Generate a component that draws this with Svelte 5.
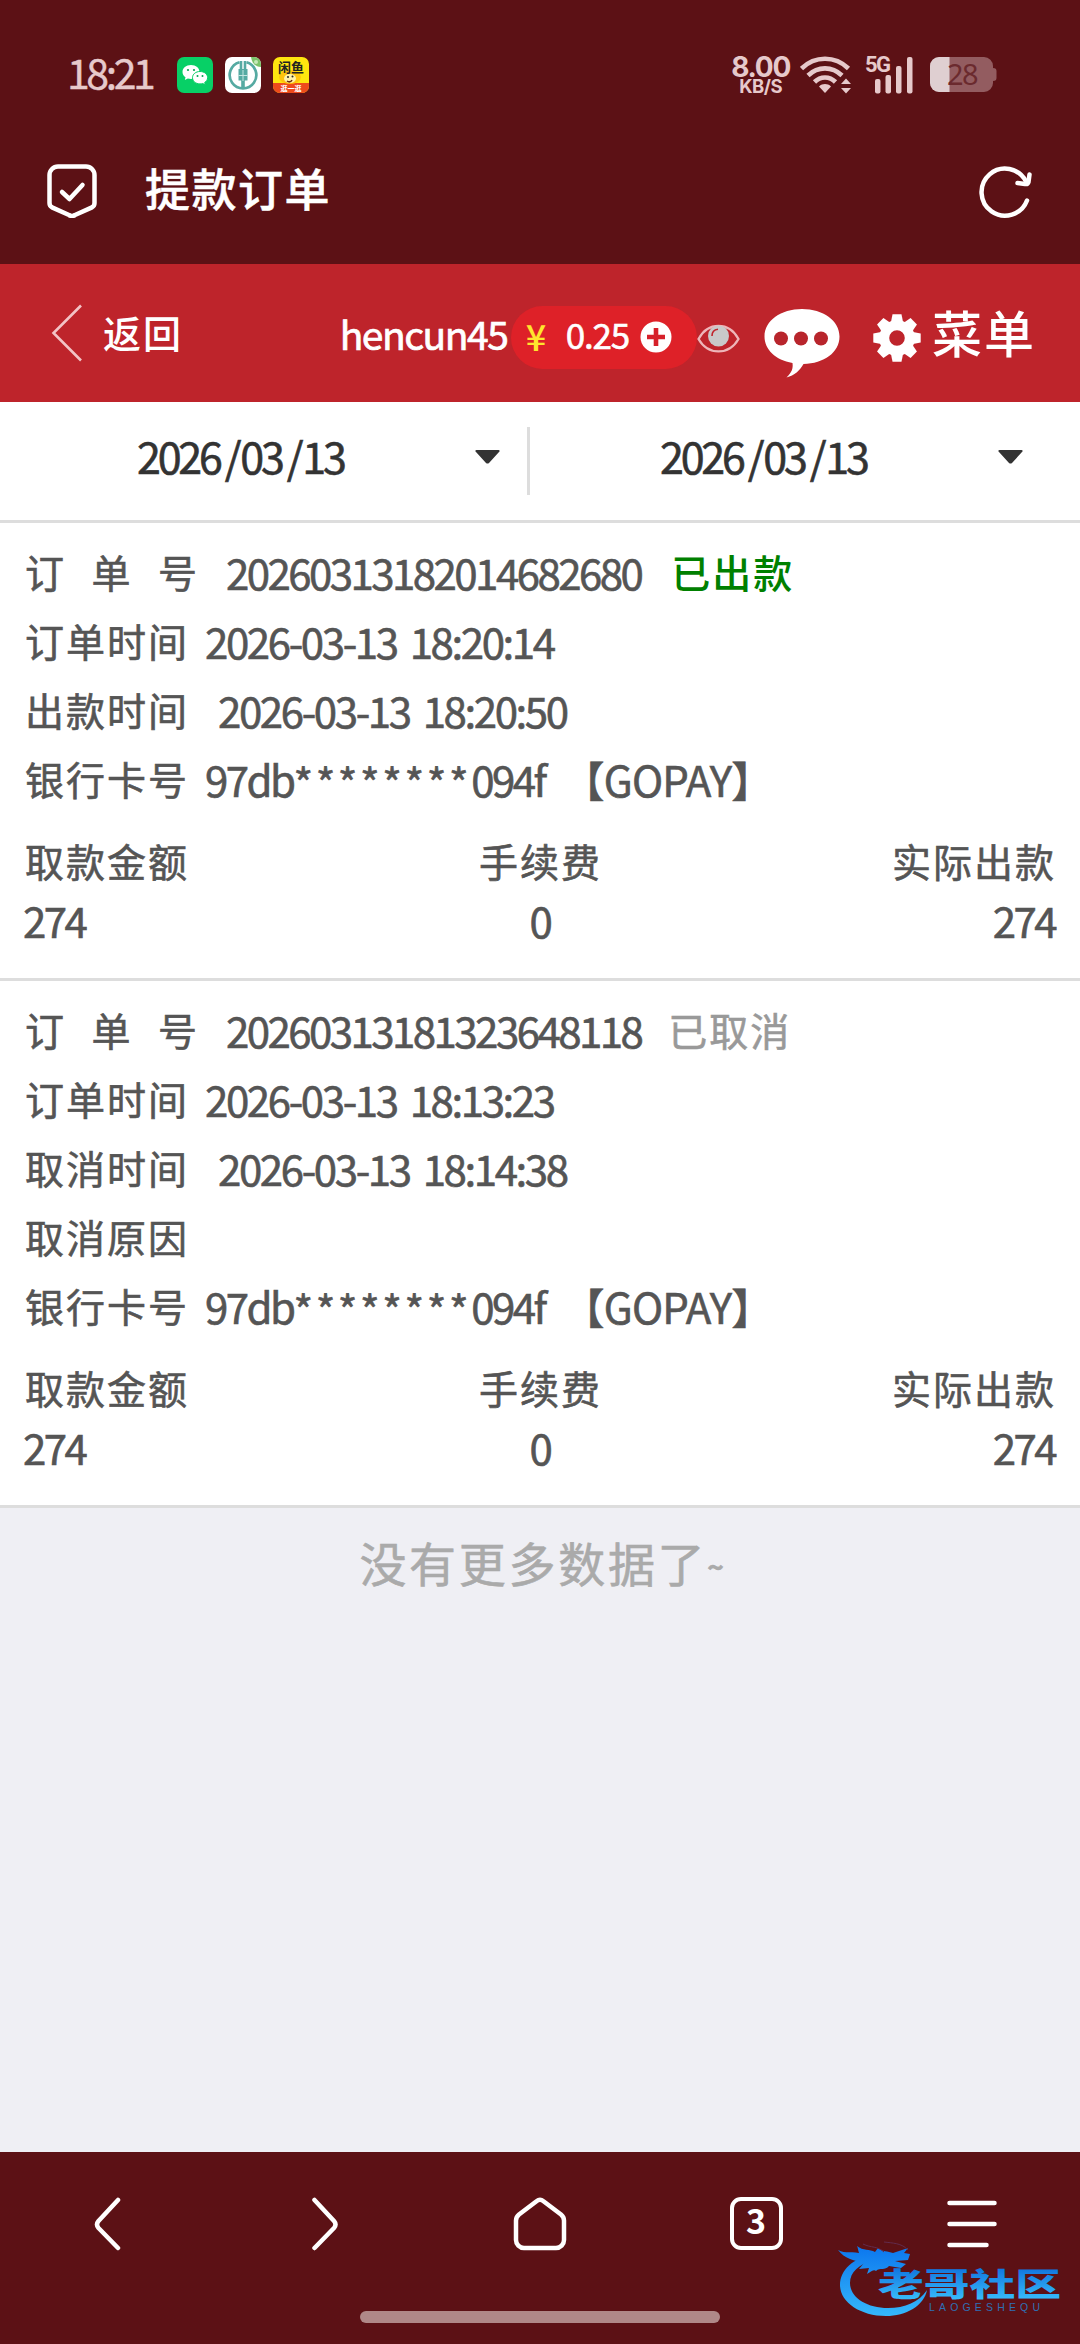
<script>
  const orders = [
    {
      id: '20260313182014682680',
      status: '已出款',
      done: true,
      created: '2026-03-13 18:20:14',
      lines: [{ label: '出款时间', value: '2026-03-13 18:20:50' }],
      card: ['97db', '********', '094f'],
      channel: '【GOPAY】',
      amount: 274,
      fee: 0,
      paid: 274
    },
    {
      id: '20260313181323648118',
      status: '已取消',
      done: false,
      created: '2026-03-13 18:13:23',
      lines: [
        { label: '取消时间', value: '2026-03-13 18:14:38' },
        { label: '取消原因', value: '' }
      ],
      card: ['97db', '********', '094f'],
      channel: '【GOPAY】',
      amount: 274,
      fee: 0,
      paid: 274
    }
  ];

  let dates = $state(['2026/03/13', '2026/03/13']);
  let tabs = $state(3);
</script>

<div class="screen">
  <div class="status-bar">
    <span class="clock">18:21</span>
    <div class="apps">
      <svg width="36" height="36" viewBox="0 0 36 36">
        <rect width="36" height="36" rx="7" fill="#07d066" />
        <path d="M14 8c-5 0-8.500 3-8.500 7 0 2.200 1.100 4 3 5.300L7.800 23l3-1.500c1 .3 2 .5 3.200.5 5 0 8.500-3 8.500-7s-3.500-7-8.500-7z" fill="#fff" />
        <path d="M23 14.500c-4.300 0-7.500 2.700-7.500 6.200s3.200 6.200 7.500 6.200c1 0 1.900-.1 2.700-.4l2.600 1.300-.6-2.400c1.800-1.100 2.900-2.800 2.900-4.700 0-3.500-3.200-6.200-7.600-6.200z" fill="#fff" stroke="#07d066" stroke-width="1" />
        <g fill="#07a552">
          <circle cx="11" cy="13" r="1.100" /><circle cx="17" cy="13" r="1.100" />
          <circle cx="20.500" cy="19" r="1" /><circle cx="25.500" cy="19" r="1" />
        </g>
      </svg>
      <svg width="36" height="36" viewBox="0 0 36 36">
        <rect width="36" height="36" rx="7" fill="#fff" />
        <path d="M26 0h3a7 7 0 0 1 7 7v3c-5 0-9-3-10-10z" fill="#7cc36a" />
        <circle cx="31" cy="5" r="2" fill="#c5e8b8" />
        <path d="M14.500 5.200a13.300 13.300 0 1 0 7 0" fill="none" stroke="#55aaa2" stroke-width="2.700" />
        <path d="M16 4v10M20 4v10" stroke="#55aaa2" stroke-width="2.600" />
        <path d="M13.500 12h9v11.500h-2.700V32h-3.600v-8.500h-2.700z" fill="#55aaa2" />
        <path d="M18 13v11M13.500 18.500h9" stroke="#c4e6e2" stroke-width="1" />
      </svg>
      <svg width="36" height="36" viewBox="0 0 36 36">
        <rect width="36" height="36" rx="7" fill="#ffe60f" />
        <path d="M0 26h36v3a7 7 0 0 1-7 7H7a7 7 0 0 1-7-7z" fill="#ee4a1c" />
        <ellipse cx="17" cy="20" rx="11" ry="7" fill="#ffc40c" />
        <ellipse cx="17" cy="21.500" rx="6" ry="4.500" fill="#fff1a8" />
        <path d="M14 24c2 1.500 4 1 5-1" stroke="#6b2b10" stroke-width="1.500" fill="none" />
        <circle cx="15" cy="20" r="1" fill="#222" /><circle cx="19.500" cy="19.500" r="1" fill="#222" />
        <text class="fish" x="18" y="15" text-anchor="middle">闲鱼</text>
        <text class="fish-sub" x="18" y="33.500" text-anchor="middle">逛一逛</text>
      </svg>
    </div>

    <div class="net">
      <span class="speed">8.00</span>
      <span class="unit">KB/S</span>
    </div>
    <svg class="wifi" width="52" height="38" viewBox="0 0 52 38">
      <g fill="none" stroke="#e6c9cb" stroke-width="4.600">
        <path d="M1.500 12.500C15-.5 35-.5 48.500 12.500" />
        <path d="M8 19.500c10-9.500 24-9.500 34 0" />
        <path d="M14.500 26c6-6 15-6 21 0" />
      </g>
      <path d="M19 30.500c3.500-3.200 8.500-3.200 12 0L25 37z" fill="#e6c9cb" />
      <path d="M46 22.500l5 5.500H41zM46 37.500l5-5.500H41z" fill="#e6c9cb" />
    </svg>
    <div class="signal">
      <span class="gen">5G</span>
      <svg width="40" height="38" viewBox="0 0 40 38" fill="#e6c9cb">
        <rect x="1" y="23" width="5.500" height="14.500" rx="2" />
        <rect x="11.500" y="19" width="5.500" height="18.500" rx="2" />
        <rect x="22" y="10" width="5.500" height="27.500" rx="2" />
        <rect x="33" y="1" width="5.500" height="36.500" rx="2" />
      </svg>
    </div>
    <svg class="battery" width="67" height="35" viewBox="0 0 67 35">
      <path d="M9 0h45a9 9 0 0 1 9 9v2c2.500 0 3.500 1 3.500 3v7c0 2-1 3-3.500 3v2a9 9 0 0 1-9 9H9a9 9 0 0 1-9-9V9a9 9 0 0 1 9-9z" fill="#935c60" />
      <path d="M9 0h10.500v35H9a9 9 0 0 1-9-9V9a9 9 0 0 1 9-9z" fill="#dfcfd1" />
      <text x="32" y="28" text-anchor="middle">28</text>
    </svg>
  </div>

  <div class="title-bar">
    <svg width="50" height="54" viewBox="0 0 50 54" fill="none" stroke="#fff" stroke-width="4.500" stroke-linecap="round" stroke-linejoin="round">
      <path d="M11 2.500h28a8.500 8.500 0 0 1 8.500 8.500v28c0 2-1 3.500-2.500 4.400L28 51a5.500 5.500 0 0 1-6 0L5 43.400C3.500 42.500 2.500 41 2.500 39V11A8.500 8.500 0 0 1 11 2.500z" />
      <path d="M15 28l7.500 7 13-14" />
    </svg>
    <h1>提款订单</h1>
    <svg width="54" height="54" viewBox="0 0 54 54" fill="none" stroke="#fff" stroke-width="4.500" stroke-linecap="round" stroke-linejoin="round">
      <path d="M49 36.500A23.500 23.500 0 1 1 48 17.500" />
      <path d="M51.500 10.500l-1 7.500q-.8 2.500-3.500 2l-7.500-1" />
    </svg>
  </div>

  <header class="account">
    <button class="back">
      <svg width="32" height="58" viewBox="0 0 32 58" fill="none" stroke="#f3c3c6" stroke-width="2.600">
        <path d="M30 1.500L2.500 29 30 56.500" />
      </svg>
      <span>返回</span>
    </button>
    <span class="user">hencun45</span>
    <div class="balance">
      <span class="yen">¥</span>
      <span class="money">0.25</span>
      <svg width="32" height="32" viewBox="0 0 32 32">
        <circle cx="16" cy="16" r="15.500" fill="#fff" />
        <path d="M16 7v18M7 16h18" stroke="#d6202a" stroke-width="4.600" />
      </svg>
    </div>
    <svg class="eye" width="43" height="30" viewBox="0 0 43 30">
      <path d="M1.500 15C11-2.500 32-2.500 41.500 15 32 31.500 11 31.500 1.500 15z" fill="none" stroke="#eeb6b9" stroke-width="2.300" />
      <circle cx="21.500" cy="12" r="10.500" fill="#c9c9c9" />
      <path d="M15 12c0-4 2.500-6.500 6-6.800" fill="none" stroke="#c0242b" stroke-width="1.600" />
    </svg>
    <svg class="chat" width="76" height="70" viewBox="0 0 76 70">
      <path d="M38 1C17 1 .5 12.500.5 28.500c0 13 11 23.500 28 26.500.8 6-1 9.500-6 14.500 8-2 13.500-7 17-13.500C60 55.500 75.500 44.500 75.500 28.500 75.500 12.500 59 1 38 1z" fill="#fff" />
      <g fill="#b8252c"><circle cx="17" cy="30.500" r="7" /><circle cx="37" cy="30.500" r="7" /><circle cx="57" cy="30.500" r="7" /></g>
    </svg>
    <button class="menu">
      <svg width="48" height="48" viewBox="-24 -24 48 48" fill="#fff">
        <circle r="12.800" fill="none" stroke="#fff" stroke-width="10" />
        {#each [0, 45, 90, 135, 180, 225, 270, 315] as angle}
          <path d="M-6-16l1.500-7.700h9L6-16z" transform="rotate({angle})" />
        {/each}
      </svg>
      <span>菜单</span>
    </button>
  </header>

  <div class="filters">
    {#each dates as date}
      <div class="date">
        <span>{#each date.split('/') as part, i}{#if i > 0}<i>/</i>{/if}{part}{/each}</span>
        <svg width="25" height="14" viewBox="0 0 25 14"><path d="M1.500 0h22q2 .5.500 2L14 13q-1.500 1.200-3 0L1 2Q-.5.5 1.500 0z" fill="#333" /></svg>
      </div>
    {/each}
  </div>

  <main>
    {#each orders as order (order.id)}
      <section class="order">
        <div class="line">
          <span class="label wide">订单号</span>
          <span class="value">{order.id}</span>
          <span class="state" class:done={order.done}>{order.status}</span>
        </div>
        <div class="line">
          <span class="label">订单时间</span>
          <span class="value time">{order.created}</span>
        </div>
        {#each order.lines as line}
          <div class="line indent">
            <span class="label">{line.label}</span>
            <span class="value time">{line.value}</span>
          </div>
        {/each}
        <div class="line">
          <span class="label">银行卡号</span>
          <span class="value card">{order.card[0]}<span class="mask">{order.card[1]}</span>{order.card[2]}</span>
          <span class="value channel">{order.channel}</span>
        </div>
        <div class="sums">
          <div class="sum"><span class="label">取款金额</span><span class="value">{order.amount}</span></div>
          <div class="sum"><span class="label">手续费</span><span class="value">{order.fee}</span></div>
          <div class="sum"><span class="label">实际出款</span><span class="value">{order.paid}</span></div>
        </div>
      </section>
    {/each}
    <p class="end">没有更多数据了<span>~</span></p>
  </main>

  <nav>
    <div class="keys">
      <svg width="54" height="54" viewBox="0 0 54 54"><path d="M37 3L17.500 24q-3 3.500 0 7L37 51" /></svg>
      <svg width="54" height="54" viewBox="0 0 54 54"><path d="M17.500 3L37 24q3 3.500 0 7L17.500 51" /></svg>
      <svg width="54" height="54" viewBox="0 0 54 54"><path d="M23.500 4.200q3.500-2.800 7 0L48 17.500q3 2.500 3 6V43a8 8 0 0 1-8 8H11a8 8 0 0 1-8-8V23.500q0-3.500 3-6z" /></svg>
      <div class="tabs">{tabs}</div>
      <svg width="54" height="54" viewBox="0 0 54 54"><path d="M4.500 6h45M4.500 27h45M4.500 48h37" /></svg>
    </div>
    <div class="handle"></div>
  </nav>

  <svg class="watermark" width="236" height="84" viewBox="0 0 236 84">
    <defs>
      <linearGradient id="blue" x1="0" y1="8" x2="0" y2="76" gradientUnits="userSpaceOnUse">
        <stop offset="0" stop-color="#0d78ee" />
        <stop offset="1" stop-color="#35b8fb" />
      </linearGradient>
      <linearGradient id="letters" x1="0" y1="29" x2="0" y2="60" gradientUnits="userSpaceOnUse">
        <stop offset="0" stop-color="#1277e0" />
        <stop offset="1" stop-color="#38bdfb" />
      </linearGradient>
    </defs>
    <g fill="url(#blue)">
      <path d="M36 15C16 18 3 30 3 45c0 17 20 31 46 31 20 0 38-10 41-26-8 12-22 18-39 18-22 0-38-11-38-25 0-11 9-19 24-23z" />
      <path d="M1 10c8 4 14 1 21 3-1-3-1-5-2-7 6 5 13 3 18 6l3-4c4 4 10 3 15 5l15-5-4 5 6 1-2 6-13 1 11 3-5 4-12-2c-4 5-9 1-13 5-2-2-4 0-9 3l2-6-10 1 5-6C16 20 8 19 1 10z" />
      <path d="M26 4c8 4 15 2 21 8M47 2c8 1 18 1 24 8" fill="none" stroke="#622b4c" stroke-width="1" />
    </g>
    <text class="mark" x="41" y="56" textLength="183" lengthAdjust="spacingAndGlyphs" fill="url(#letters)">老哥社区</text>
    <text class="mark-sub" x="92" y="71" textLength="111" fill="#2f70b4">LAOGESHEQU</text>
  </svg>
</div>

<style>
  :global(body) {
    margin: 0;
  }

  .screen {
    position: relative;
    display: flex;
    flex-direction: column;
    width: 1080px;
    height: 2344px;
    overflow: hidden;
    background: #efeff4;
    color: #555;
    font-family: 'Noto Sans CJK SC', 'Noto Sans', sans-serif;
    font-size: 40px;
    line-height: 1;
  }

  svg {
    display: block;
    flex: none;
  }

  button {
    display: flex;
    align-items: center;
    padding: 0;
    border: 0;
    background: none;
    color: inherit;
    font: inherit;
  }

  .status-bar {
    display: flex;
    align-items: center;
    box-sizing: border-box;
    height: 118px;
    padding: 31px 83px 0 67px;
    background: #5c1115;
    color: #e6c9cb;
  }

  .clock {
    width: 110px;
    margin-top: -6px;
    font-size: 41px;
    letter-spacing: -3.4px;
    white-space: nowrap;
    -webkit-text-stroke: 0.4px;
  }

  .apps {
    display: flex;
    gap: 12px;
    margin-right: auto;
  }

  .fish {
    font-size: 13px;
    font-weight: 700;
    fill: #222;
  }

  .fish-sub {
    font-size: 7px;
    font-weight: 700;
    fill: #fff;
  }

  .net {
    display: flex;
    flex-direction: column;
    align-items: center;
    margin-right: 10px;
    font-family: Inter, sans-serif;
    font-weight: 700;
  }

  .speed {
    font-size: 28px;
    line-height: 22px;
    letter-spacing: -1.3px;
  }

  .unit {
    font-size: 18.500px;
    line-height: 16px;
    letter-spacing: -0.5px;
  }

  .wifi {
    margin-right: 13px;
  }

  .signal {
    position: relative;
    margin-right: 16px;
    padding-left: 9px;
  }

  .gen {
    position: absolute;
    top: 0;
    left: 0;
    font-family: Roboto, sans-serif;
    font-size: 22px;
    font-weight: 700;
    line-height: 17px;
    letter-spacing: -1.5px;
  }

  .battery {
    overflow: visible;
  }

  .battery text {
    font-family: 'Noto Sans', sans-serif;
    font-size: 29px;
    letter-spacing: -1.5px;
    fill: #6b2a2e;
  }

  .title-bar {
    display: flex;
    align-items: center;
    box-sizing: border-box;
    height: 146px;
    padding: 0 48px 0 47px;
    background: #5c1115;
    color: #fff;
  }

  h1 {
    margin: -8px auto 0 48px;
    font-size: 45px;
    font-weight: 500;
    letter-spacing: 1.5px;
    -webkit-text-stroke: 0.5px;
  }

  .account {
    display: flex;
    align-items: center;
    box-sizing: border-box;
    height: 138px;
    padding: 0 44px 0 51px;
    background: #be242b;
    color: #fff;
  }

  .back {
    width: 290px;
    gap: 20px;
    font-size: 38px;
    font-weight: 500;
  }

  .back span {
    margin-top: -3px;
    letter-spacing: 2px;
  }

  .user {
    width: 172px;
    font-size: 39px;
    letter-spacing: -1.5px;
    white-space: nowrap;
    -webkit-text-stroke: 0.7px;
  }

  .balance {
    display: flex;
    align-items: center;
    box-sizing: border-box;
    width: 187px;
    height: 63px;
    padding-left: 15px;
    border-radius: 32px;
    background: #de2128;
  }

  .balance svg {
    margin-left: 9px;
  }

  .yen {
    width: 40px;
    margin-top: -5px;
    color: #ffe52e;
    font-size: 36px;
    font-weight: 500;
  }

  .money {
    width: 65px;
    margin-top: -7px;
    font-size: 35px;
    letter-spacing: -1.2px;
    -webkit-text-stroke: 0.6px;
  }

  .balance,
  .eye {
    position: relative;
    top: 4px;
  }

  .eye {
    margin-top: 4px;
  }

  .chat {
    margin: 20px 33px 0 24px;
  }

  .menu {
    gap: 11px;
    margin-top: 9px;
    font-size: 50px;
    font-weight: 500;
  }

  .menu span {
    margin-top: -14px;
    letter-spacing: 2px;
    white-space: nowrap;
  }

  .filters {
    display: flex;
    align-items: center;
    height: 118px;
    border-bottom: 3px solid #ddd;
    background: #fff;
    color: #333;
  }

  .date {
    display: flex;
    align-items: center;
    justify-content: space-between;
    box-sizing: border-box;
    width: 530px;
    height: 68px;
    padding: 0 27px 8px 137px;
    border-right: 3px solid #ddd;
    font-size: 43px;
    letter-spacing: -3.2px;
    -webkit-text-stroke: 0.6px;
  }

  .date + .date {
    width: 523px;
    padding: 0 30px 8px 130px;
    border: 0;
  }

  .date span {
    margin-top: -3px;
  }

  .date i {
    margin: 0 2px 0 5px;
    font-style: normal;
  }

  main {
    flex: 1;
  }

  .order {
    box-sizing: border-box;
    padding: 14px 24px 28px;
    border-bottom: 3px solid #ddd;
    background: #fff;
    -webkit-text-stroke: 0.6px;
  }

  .line {
    display: flex;
    align-items: center;
    gap: 16px;
    height: 69px;
    padding-bottom: 1px;
    margin-bottom: -1px;
    white-space: nowrap;
  }

  .indent {
    gap: 29px;
  }

  .label,
  .state {
    font-size: 39px;
    letter-spacing: 2px;
  }

  .label {
    margin-left: 1px;
  }

  .wide {
    width: 185px;
    letter-spacing: 27.500px;
  }

  .value {
    font-size: 42px;
    letter-spacing: -2.550px;
  }

  .time {
    letter-spacing: -2.4px;
    word-spacing: 6px;
  }

  .mask {
    position: relative;
    top: 3px;
    letter-spacing: 2.600px;
  }

  .channel {
    margin-left: 2px;
    letter-spacing: -0.8px;
  }

  .state {
    margin-left: 11px;
    color: #999;
  }

  .done {
    margin-left: 14px;
    color: #008000;
    font-weight: 500;
    -webkit-text-stroke: 0;
  }

  .sums {
    display: grid;
    grid-template-columns: repeat(3, 1fr);
    padding-top: 17px;
  }

  .sum {
    display: flex;
    flex-direction: column;
    align-items: center;
  }

  .sum:first-child {
    align-items: flex-start;
  }

  .sum:last-child {
    align-items: flex-end;
  }

  .sum span {
    line-height: 60px;
  }

  .sum:first-child .value {
    margin-left: -1px;
  }

  .sum:last-child .value {
    margin-right: 1px;
  }

  .end {
    margin: 27px 0 0 6px;
    color: #aaa;
    font-size: 47px;
    line-height: 54px;
    letter-spacing: 2.700px;
    text-align: center;
    -webkit-text-stroke: 0.6px;
  }

  .end span {
    font-size: 28px;
    font-weight: 700;
    vertical-align: 4px;
  }

  nav {
    box-sizing: border-box;
    height: 192px;
    padding-top: 45px;
    background: #5c1115;
  }

  .keys {
    display: grid;
    grid-template-columns: repeat(5, 216px);
    justify-items: center;
  }

  .keys path {
    fill: none;
    stroke: #fff;
    stroke-width: 4.500px;
    stroke-linecap: round;
    stroke-linejoin: round;
  }

  .tabs {
    box-sizing: border-box;
    width: 53px;
    height: 53px;
    border: 4.500px solid #fff;
    border-radius: 11px;
    color: #fff;
    font-size: 34px;
    font-weight: 700;
    line-height: 38px;
    text-align: center;
  }

  .handle {
    width: 360px;
    height: 12px;
    margin: 60px auto 0;
    border-radius: 6px;
    background: #b08888;
  }

  .watermark {
    position: absolute;
    right: 7px;
    bottom: 20px;
  }

  .mark {
    font-size: 32px;
    font-weight: 900;
  }

  .mark-sub {
    font-family: 'Liberation Sans', sans-serif;
    font-size: 10.500px;
  }
</style>
